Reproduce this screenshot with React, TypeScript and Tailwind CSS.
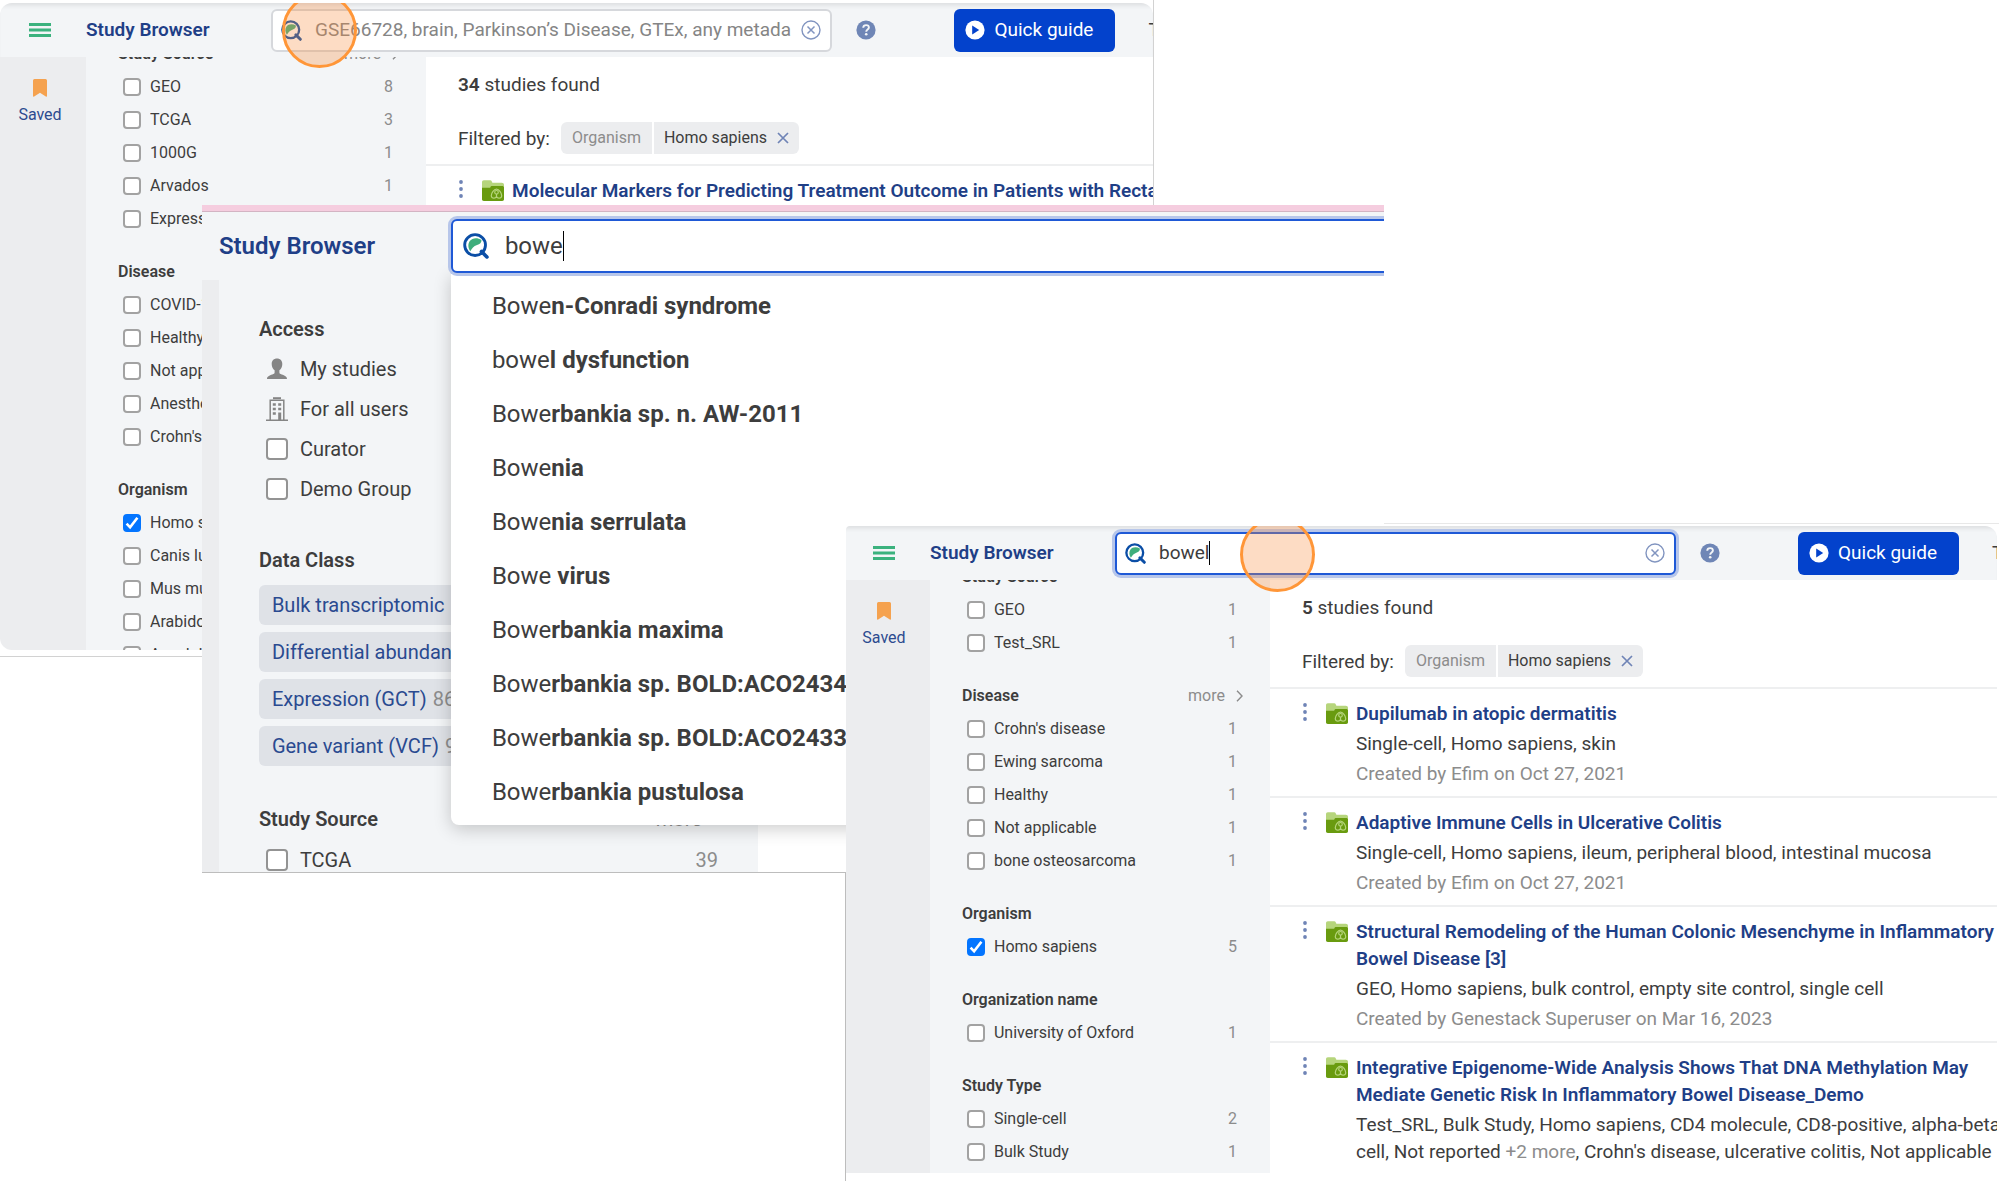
import type { ReactNode } from "react";

type Facet = { label: string; count?: string; checked?: boolean };
type Group = { title: string; more?: boolean; items: Facet[] };
type Study = { title: ReactNode; meta?: ReactNode; created?: string };

const facetsBefore: Group[] = [
  {
    title: "Study Source",
    more: true,
    items: [
      { label: "GEO", count: "8" },
      { label: "TCGA", count: "3" },
      { label: "1000G", count: "1" },
      { label: "Arvados", count: "1" },
      { label: "Expression", count: "1" },
    ],
  },
  {
    title: "Disease",
    items: [
      { label: "COVID-19" },
      { label: "Healthy" },
      { label: "Not applicable" },
      { label: "Anesthesia" },
      { label: "Crohn's disease" },
    ],
  },
  {
    title: "Organism",
    items: [
      { label: "Homo sapiens", checked: true },
      { label: "Canis lupus" },
      { label: "Mus musculus" },
      { label: "Arabidopsis" },
      { label: "Angylobacter" },
    ],
  },
];

const facetsAfter: Group[] = [
  {
    title: "Study Source",
    items: [
      { label: "GEO", count: "1" },
      { label: "Test_SRL", count: "1" },
    ],
  },
  {
    title: "Disease",
    more: true,
    items: [
      { label: "Crohn's disease", count: "1" },
      { label: "Ewing sarcoma", count: "1" },
      { label: "Healthy", count: "1" },
      { label: "Not applicable", count: "1" },
      { label: "bone osteosarcoma", count: "1" },
    ],
  },
  { title: "Organism", items: [{ label: "Homo sapiens", count: "5", checked: true }] },
  { title: "Organization name", items: [{ label: "University of Oxford", count: "1" }] },
  {
    title: "Study Type",
    items: [
      { label: "Single-cell", count: "2" },
      { label: "Bulk Study", count: "1" },
    ],
  },
];

const studiesBefore: Study[] = [
  { title: "Molecular Markers for Predicting Treatment Outcome in Patients with Rectal" },
];

const studiesAfter: Study[] = [
  {
    title: "Dupilumab in atopic dermatitis",
    meta: "Single-cell, Homo sapiens, skin",
    created: "Created by Efim on Oct 27, 2021",
  },
  {
    title: "Adaptive Immune Cells in Ulcerative Colitis",
    meta: "Single-cell, Homo sapiens, ileum, peripheral blood, intestinal mucosa",
    created: "Created by Efim on Oct 27, 2021",
  },
  {
    title: (
      <>
        Structural Remodeling of the Human Colonic Mesenchyme in Inflammatory
        <br />
        Bowel Disease [3]
      </>
    ),
    meta: "GEO, Homo sapiens, bulk control, empty site control, single cell",
    created: "Created by Genestack Superuser on Mar 16, 2023",
  },
  {
    title: (
      <>
        Integrative Epigenome-Wide Analysis Shows That DNA Methylation May
        <br />
        Mediate Genetic Risk In Inflammatory Bowel Disease_Demo
      </>
    ),
    meta: (
      <>
        Test_SRL, Bulk Study, Homo sapiens, CD4 molecule, CD8-positive, alpha-beta
        <br />
        cell, Not reported <span className="text-[#8c8c8c]">+2 more</span>, Crohn's disease, ulcerative colitis, Not
        applicable
      </>
    ),
    created: "Created",
  },
];

const suggestions: [string, string][] = [
  ["Bowe", "n-Conradi syndrome"],
  ["bowe", "l dysfunction"],
  ["Bowe", "rbankia sp. n. AW-2011"],
  ["Bowe", "nia"],
  ["Bowe", "nia serrulata"],
  ["Bowe", " virus"],
  ["Bowe", "rbankia maxima"],
  ["Bowe", "rbankia sp. BOLD:ACO2434"],
  ["Bowe", "rbankia sp. BOLD:ACO2433"],
  ["Bowe", "rbankia pustulosa"],
];

const dataClasses: [string, string][] = [
  ["Bulk transcriptomic", ""],
  ["Differential abundan", ""],
  ["Expression (GCT)", "86"],
  ["Gene variant (VCF)", "9"],
];

function SearchIcon({ className }: { className: string }) {
  return (
    <svg viewBox="0 0 20 20" className={className} fill="none" aria-hidden="true">
      <circle cx="9.3" cy="9.3" r="8" stroke="#0b4ea6" strokeWidth="2.2" />
      <path d="M14.2 14.2 18.4 18.4" stroke="#0b4ea6" strokeWidth="2.8" strokeLinecap="round" />
      <path
        d="M5.6 14C3.9 11.800 3.600 8.500 5.200 6.200 7 3.700 11 3.200 14.200 5.300c.2 2.200-1.200 3.200-3.400 3.900C8 10.100 7 12 5.600 14Z"
        fill="#3fae7c"
      />
    </svg>
  );
}

function HamburgerIcon() {
  return (
    <svg viewBox="0 0 22 14" className="h-[14px] w-[22px]" fill="#3bb27e" aria-hidden="true">
      <path d="M0 0h22v3H0zM0 5.500h22v3H0zM0 11h22v3H0z" />
    </svg>
  );
}

function BookmarkIcon() {
  return (
    <svg viewBox="0 0 14 18" className="h-[18px] w-[14px]" aria-hidden="true">
      <path
        d="M1.500 0h11A1.500 1.500 0 0 1 14 1.500V17c0 .8-.7 1-1.200.5L7 13.800 1.200 17.500C.7 18 0 17.800 0 17V1.500A1.500 1.500 0 0 1 1.500 0Z"
        fill="#f5a24f"
      />
    </svg>
  );
}

function ClearIcon() {
  return (
    <svg viewBox="0 0 20 20" className="size-5" fill="none" stroke="#8295c0" aria-hidden="true">
      <circle cx="10" cy="10" r="9" strokeWidth="1.400" />
      <path d="m6.500 6.500 7 7m0-7-7 7" strokeWidth="1.500" />
    </svg>
  );
}

function HelpIcon() {
  return (
    <svg viewBox="0 0 20 20" className="size-5" fill="none" aria-hidden="true">
      <circle cx="10" cy="10" r="9.600" fill="#6f86b6" />
      <path
        d="M7.200 7.700c.1-1.600 1.300-2.600 2.900-2.600s2.800.9 2.800 2.400c0 2-2.700 2-2.700 4.200"
        stroke="#f3f5f7"
        strokeWidth="1.900"
      />
      <circle cx="10.200" cy="14.300" r="1.300" fill="#f3f5f7" />
    </svg>
  );
}

function PlayIcon() {
  return (
    <svg viewBox="0 0 20 20" className="size-5" aria-hidden="true">
      <circle cx="10" cy="10" r="9.600" fill="#fff" />
      <path d="M7.200 5.400v9.200l7-4.600Z" fill="#0342cc" />
    </svg>
  );
}

function FolderIcon() {
  return (
    <svg viewBox="0 0 22 21" className="h-[21px] w-[22px]" fill="none" aria-hidden="true">
      <path
        d="M0 2.200C0 1.100.7.300 1.800.300h6.400c.8 0 1.300.4 1.600 1.100l.6 1.400h9.400c1.300 0 2.200.8 2.200 2V10H0Z"
        fill="#b6d57c"
      />
      <path
        d="M0 7.800h7.200c.8 0 1-.3 1.300-.9.400-.7.700-1 1.500-1h10.200c1 0 1.800.7 1.800 1.700v11.700c0 1-.7 1.700-1.800 1.700H1.800C.7 21 0 20.300 0 19.300Z"
        fill="#699b0f"
      />
      <g stroke="#b6d57c" strokeWidth="1.200">
        <path d="M14.500 9c2.700.4 4.900 4 5.200 6.500.1 1.700-1 2.600-2.700 2.600-1.200 0-2-.6-2.500-1.500-.5.900-1.300 1.500-2.500 1.500-1.700 0-2.800-.9-2.700-2.600C9.600 13 11.800 9.400 14.500 9Z" />
        <circle cx="14.500" cy="12.300" r="1.800" />
        <path d="M14.500 14.100v2.500" />
      </g>
    </svg>
  );
}

function DotsIcon() {
  return (
    <svg viewBox="0 0 4 18" className="h-[18px] w-1" fill="#6f84b6" aria-hidden="true">
      <circle cx="2" cy="2" r="1.900" />
      <circle cx="2" cy="9" r="1.900" />
      <circle cx="2" cy="16" r="1.900" />
    </svg>
  );
}

function Chevron() {
  return (
    <svg viewBox="0 0 7 12" className="h-3 w-[7px]" fill="none" stroke="#8c8c8c" strokeWidth="1.400" aria-hidden="true">
      <path d="m1 .8 5 5.200-5 5.200" />
    </svg>
  );
}

function UserIcon() {
  return (
    <svg viewBox="0 0 22 22" className="size-[22px]" fill="#858585" aria-hidden="true">
      <path d="M11 .5c3.200 0 5.300 2.200 5.300 5.500 0 2.700-1.200 5-2.900 6.300v2.200c0 1 .8 1.500 2.300 2 3 1 5.300 1.900 5.300 4.500H1c0-2.600 2.300-3.500 5.300-4.500 1.500-.5 2.300-1 2.300-2v-2.200C6.900 11 5.700 8.700 5.700 6 5.700 2.700 7.800.5 11 .5Z" />
    </svg>
  );
}

function BuildingIcon() {
  return (
    <svg viewBox="0 0 22 24" className="h-6 w-[22px]" fill="none" stroke="#858585" aria-hidden="true">
      <path d="M7 1.200h8" strokeWidth="2" />
      <path d="M4.200 23V3.300h13.600V23M0 23.200h22" strokeWidth="1.500" />
      <path d="M6.800 7.500h3M12.200 7.500h3M6.800 12h3M12.200 12h3M6.800 16.500h3" strokeWidth="2.400" />
      <path d="M13.700 15.500V23" strokeWidth="3" />
    </svg>
  );
}

function Tick({ checked, large }: { checked?: boolean; large?: boolean }) {
  return (
    <span className="relative flex shrink-0">
      <input
        type="checkbox"
        defaultChecked={checked}
        className={
          large
            ? "peer size-[22px] appearance-none rounded border-2 border-[#939393] bg-white"
            : "peer size-[18px] appearance-none rounded border-2 border-[#a2a2a2] bg-white checked:border-[#0375ff] checked:bg-[#0375ff]"
        }
      />
      <svg
        viewBox="0 0 18 18"
        className="pointer-events-none absolute inset-0 hidden size-full peer-checked:block"
        fill="none"
        stroke="#fff"
        strokeWidth="2.600"
        aria-hidden="true"
      >
        <path d="m3.600 9.600 3.500 3.700 7.300-9.600" />
      </svg>
    </span>
  );
}

function FacetGroup({ group }: { group: Group }) {
  return (
    <section className="mb-[21px] pr-[27px] pl-8">
      <div className="flex h-8 items-center justify-between">
        <h3 className="font-semibold text-[#3d3d3d]">{group.title}</h3>
        {group.more && (
          <button className="flex items-center gap-[11px] text-[#8c8c8c]">
            more <Chevron />
          </button>
        )}
      </div>
      {group.items.map((f) => (
        <label key={f.label} className="flex h-[33px] items-center gap-[9px] pr-[6px] pl-[5px]">
          <Tick checked={f.checked} />
          <span className="grow truncate">{f.label}</span>
          <span className="text-[#8c8c8c]">{f.count}</span>
        </label>
      ))}
    </section>
  );
}

function StudyRow({ study }: { study: Study }) {
  return (
    <article className="flex border-t-2 border-[#eeeff0] pt-[11px] pb-[9px] pl-[33px] leading-[27px] whitespace-nowrap">
      <button aria-label="Study actions" className="mt-[3px] h-[18px] w-[23px] shrink-0">
        <DotsIcon />
      </button>
      <span className="mt-[3px] w-[30px] shrink-0">
        <FolderIcon />
      </span>
      <div className="flex flex-col gap-[3px]">
        <a href="#study" className="font-semibold text-[#1f3f87]">
          {study.title}
        </a>
        {study.meta && <p>{study.meta}</p>}
        {study.created && <p className="text-[#8c8c8c]">{study.created}</p>}
      </div>
    </article>
  );
}

function StudyWindow({
  query,
  found,
  groups,
  studies,
}: {
  query?: string;
  found: string;
  groups: Group[];
  studies: Study[];
}) {
  return (
    <div className="flex h-full flex-col text-[19px] text-[#3d3d3d]">
      <header className="flex h-[54px] shrink-0 items-center bg-[#f3f5f7] shadow-[inset_0_5px_5px_-3px_rgba(0,0,0,0.1)]">
        <button aria-label="Menu" className="flex w-[86px] justify-center pr-[6px]">
          <HamburgerIcon />
        </button>
        <h1 className="w-[185px] font-semibold text-[#1f3f87]">Study Browser</h1>
        <div
          className={
            query
              ? "flex h-[43px] grow items-center rounded-md border-2 border-[#1f59d6] bg-white pr-[9px] pl-2 ring-3 ring-[#b7c6ea]"
              : "flex h-[43px] grow items-center rounded-md border-2 border-[#d6d8dc] bg-white pr-[9px] pl-2"
          }
        >
          <SearchIcon className="size-[21px] shrink-0" />
          {query ? (
            <>
              <input
                aria-label="Search studies"
                defaultValue={query}
                className="ml-[13px] field-sizing-content outline-none"
              />
              <span className="h-6 w-px bg-black" />
              <span className="grow" />
            </>
          ) : (
            <input
              aria-label="Search studies"
              placeholder="GSE66728, brain, Parkinson’s Disease, GTEx, any metada"
              className="ml-[13px] min-w-0 grow outline-none placeholder:text-[#858585]"
            />
          )}
          <button aria-label="Clear search">
            <ClearIcon />
          </button>
        </div>
        <button aria-label="Help" className="mr-[78px] ml-6 shrink-0">
          <HelpIcon />
        </button>
        <button className="flex h-[43px] w-[161px] shrink-0 items-center gap-[9px] rounded-md bg-[#0342cc] pl-[11px] text-white">
          <PlayIcon /> Quick guide
        </button>
        <span className="ml-[33px] w-[5px] shrink-0">T</span>
      </header>
      <div className="flex min-h-0 grow overflow-hidden">
        <nav className="flex w-[86px] shrink-0 flex-col items-center bg-[#ecedef] pt-[22px] pr-[6px]">
          <a href="#saved" className="flex flex-col items-center gap-2 text-base leading-5 text-[#2c4b8f]">
            <BookmarkIcon />
            Saved
          </a>
        </nav>
        <aside className="w-[340px] shrink-0 overflow-hidden bg-[#f3f5f7] text-base">
          <div className="-mt-[19px]">
            {groups.map((g) => (
              <FacetGroup key={g.title} group={g} />
            ))}
          </div>
        </aside>
        <main className="min-w-0 grow overflow-hidden bg-white">
          <div className="flex flex-col gap-6 pt-[14px] pb-[10px] pl-8 leading-[27px]">
            <p>
              <strong className="font-semibold">{found}</strong> studies found
            </p>
            <div className="flex items-center">
              Filtered by:
              <div className="ml-[11px] flex h-8 gap-0.5 overflow-hidden rounded-md text-base">
                <span className="flex items-center bg-[#ecedef] px-[11px] text-[#8c8c8c]">Organism</span>
                <span className="flex items-center gap-[10px] bg-[#ecedef] px-[10px]">
                  Homo sapiens
                  <button aria-label="Remove filter">
                    <svg viewBox="0 0 12 12" className="size-3" stroke="#6f84b6" strokeWidth="1.700" aria-hidden="true">
                      <path d="m1 1 10 10M11 1 1 11" />
                    </svg>
                  </button>
                </span>
              </div>
            </div>
          </div>
          {studies.map((s, i) => (
            <StudyRow key={i} study={s} />
          ))}
        </main>
      </div>
    </div>
  );
}

function SuggestWindow() {
  const access: [string, ReactNode][] = [
    ["My studies", <UserIcon />],
    ["For all users", <BuildingIcon />],
  ];
  return (
    <div className="flex h-full flex-col text-xl text-[#3d3d3d]">
      <div className="h-[7px] shrink-0 border-b border-[#d3b4c3] bg-[#f5cddf]" />
      <header className="flex h-[68px] shrink-0 items-center bg-[#f3f5f7] pl-[17px]">
        <h1 className="w-[232px] shrink-0 text-2xl font-semibold text-[#1f3f87]">Study Browser</h1>
        <div className="relative -mr-4 grow">
          <ul className="absolute inset-x-0 top-full rounded-bl-lg bg-white py-[6px] text-2xl shadow-[0_4px_18px_rgba(0,0,0,0.2)]">
            {suggestions.map(([typed, rest]) => (
              <li key={rest}>
                <button className="flex h-[54px] w-full items-center pl-[41px] whitespace-pre">
                  {typed}
                  <b>{rest}</b>
                </button>
              </li>
            ))}
          </ul>
          <div className="relative flex h-[54px] items-center rounded-md border-2 border-[#1f59d6] bg-white pl-[10px] text-2xl ring-3 ring-[#b7c6ea]">
            <SearchIcon className="size-[26px] shrink-0" />
            <input aria-label="Search studies" defaultValue="bowe" className="ml-4 field-sizing-content outline-none" />
            <span className="h-[30px] w-px bg-black" />
          </div>
        </div>
      </header>
      <div className="flex min-h-0 grow">
        <div className="w-[17px] shrink-0 bg-[#ecedef]" />
        <aside className="w-[539px] overflow-hidden bg-[#f3f5f7] px-10 pt-[29px] whitespace-nowrap">
          <h2 className="flex h-10 items-center font-semibold">Access</h2>
          {access.map(([label, icon]) => (
            <a href="#access" key={label} className="flex h-10 items-center gap-3 pl-[7px]">
              {icon}
              {label}
            </a>
          ))}
          {["Curator", "Demo Group"].map((label) => (
            <label key={label} className="flex h-10 items-center gap-3 pl-[7px]">
              <Tick large />
              {label}
            </label>
          ))}
          <h2 className="mt-[31px] mb-[5px] flex h-10 items-center font-semibold">Data Class</h2>
          <div className="flex flex-col items-start gap-[7px]">
            {dataClasses.map(([label, n]) => (
              <button
                key={label}
                className="flex h-10 min-w-[240px] items-center gap-[6px] rounded-md bg-[#dfe2e7] px-[13px] text-[#2a4a90]"
              >
                {label} <span className="text-[#8c8c8c]">{n}</span>
              </button>
            ))}
          </div>
          <div className="mt-8 flex h-[41px] items-center justify-between pr-4">
            <h2 className="font-semibold">Study Source</h2>
            <button className="text-[#8c8c8c]">more</button>
          </div>
          <label className="flex h-[41px] items-center gap-3 pl-[7px]">
            <Tick large />
            <span className="grow">TCGA</span>
            <span className="text-[#8c8c8c]">39</span>
          </label>
        </aside>
      </div>
    </div>
  );
}

function ClickMarker({ className }: { className: string }) {
  return (
    <span
      className={
        "pointer-events-none absolute size-[75px] rounded-full border-3 border-[#ff9638] bg-[#f98b3c]/30 " + className
      }
    />
  );
}

export default function App() {
  return (
    <div className="relative h-screen overflow-hidden bg-white font-['Roboto','Liberation_Sans',sans-serif]">
      <div className="absolute top-0 left-0 h-[657px] w-[57.75%] border-r border-b border-[#d2d2d2] pt-[3px]">
        <div className="relative h-[647px] overflow-hidden rounded-xl">
          <StudyWindow found="34" groups={facetsBefore} studies={studiesBefore} />
          <ClickMarker className="-top-[10px] left-[282px]" />
        </div>
      </div>

      <div className="absolute top-[205px] left-[10.1%] h-[668px] w-[59.15%] overflow-hidden border-b border-[#bdbdbd] bg-white">
        <SuggestWindow />
      </div>

      <div className="absolute top-[523px] right-0 h-px w-[30.75%] bg-[#e8e8e8]" />
      <div className="absolute top-[872px] bottom-0 left-[42.27%] w-px bg-[#bdbdbd]" />
      <div className="absolute top-[526px] right-[2px] left-[42.32%] h-[647px] overflow-hidden rounded-tl rounded-tr-xl bg-white">
        <div className="-ml-[2px] h-full">
          <StudyWindow query="bowel" found="5" groups={facetsAfter} studies={studiesAfter} />
        </div>
        <ClickMarker className="-top-[9px] left-[394px]" />
      </div>
    </div>
  );
}
